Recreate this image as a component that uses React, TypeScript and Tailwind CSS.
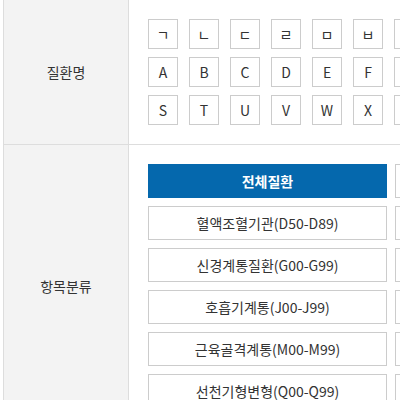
const consonants = ["ㄱ", "ㄴ", "ㄷ", "ㄹ", "ㅁ", "ㅂ", "ㅅ", "ㅇ", "ㅈ", "ㅊ", "ㅋ", "ㅌ", "ㅍ", "ㅎ"];
const alphaTop = ["A", "B", "C", "D", "E", "F", "G", "H", "I", "J", "K", "L", "M", "N", "O", "P", "Q", "R"];
const alphaBottom = ["S", "T", "U", "V", "W", "X", "Y", "Z"];

const categories = [
    { name: "전체질환", active: true },
    { name: "감염성질환(A00-B99)" },
    { name: "혈액조혈기관(D50-D89)" },
    { name: "내분비계통(E00-E90)" },
    { name: "신경계통질환(G00-G99)" },
    { name: "순환기계통(I00-I99)" },
    { name: "호흡기계통(J00-J99)" },
    { name: "소화기계통(K00-K93)" },
    { name: "근육골격계통(M00-M99)" },
    { name: "비뇨생식계통(N00-N99)" },
    { name: "선천기형변형(Q00-Q99)" },
    { name: "기타(R00-R99)" },
];

function LetterRow({ letters }: { letters: string[] }) {
    return (
        <div className="flex gap-[11px]">
            {letters.map((l) => (
                <button
                    key={l}
                    className="w-[30px] h-[30px] shrink-0 flex items-center justify-center border border-[#cccccc] bg-white text-[14px] text-[#333333]"
                >
                    {l}
                </button>
            ))}
        </div>
    );
}

export default function App() {
    return (
        <div
            className="w-[400px] h-[400px] overflow-hidden bg-white pl-[3px]"
            style={{ fontFamily: '"Noto Sans CJK KR", "Noto Sans", sans-serif' }}
        >
            <div className="w-[700px] border-l border-[#dddddd]">
                <div className="flex border-b border-[#dddddd]">
                    <div className="w-[125px] shrink-0 bg-[#f3f3f3] border-r border-[#dddddd] flex items-center justify-center text-[14px] text-[#333333]">
                        질환명
                    </div>
                    <div className="flex flex-col gap-[8px] py-[19px] pl-[19px]">
                        <LetterRow letters={consonants} />
                        <LetterRow letters={alphaTop} />
                        <LetterRow letters={alphaBottom} />
                    </div>
                </div>
                <div className="flex">
                    <div className="w-[125px] shrink-0 bg-[#f3f3f3] border-r border-[#dddddd] flex items-center justify-center text-[14px] text-[#333333]">
                        항목분류
                    </div>
                    <div className="grid grid-cols-[239px_239px] gap-[8px] py-[19px] pl-[19px]">
                        {categories.map((c) => (
                            <button
                                key={c.name}
                                className={
                                    c.active
                                        ? "h-[34px] flex items-center justify-center bg-[#0568ad] text-white text-[14px] font-bold"
                                        : "h-[34px] flex items-center justify-center border border-[#cccccc] bg-white text-[#333333] text-[14px]"
                                }
                            >
                                {c.name}
                            </button>
                        ))}
                    </div>
                </div>
            </div>
        </div>
    );
}
